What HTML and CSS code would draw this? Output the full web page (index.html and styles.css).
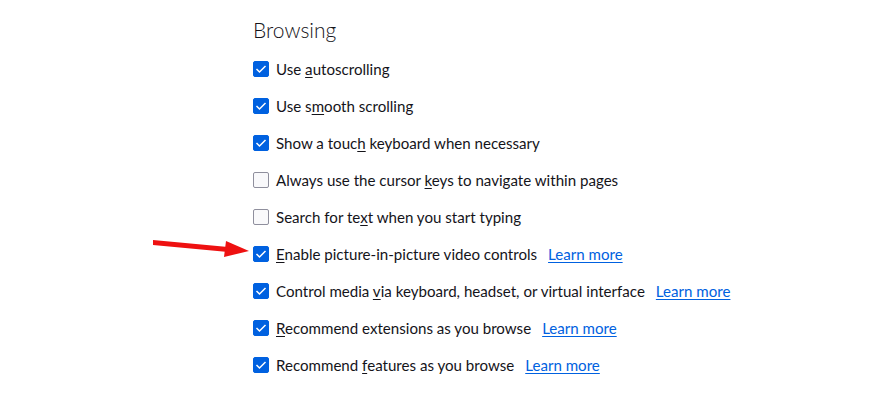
FILE: index.html
```html
<!DOCTYPE html>
<html lang="en">

<head>
  <meta charset="UTF-8">
  <title>Browsing</title>
  <link rel="stylesheet" href="styles.css">
</head>

<body>
  <div class="pane">
    <h2 class="pane-tit">Browsing</h2>
    <ul class="opts">
      <li class="opt"><span class="box on"></span><span class="lbl">Use <u>a</u>utoscrolling</span></li>
      <li class="opt"><span class="box on"></span><span class="lbl">Use s<u>m</u>ooth scrolling</span></li>
      <li class="opt"><span class="box on"></span><span class="lbl">Show a touc<u>h</u> keyboard when necessary</span></li>
      <li class="opt"><span class="box"></span><span class="lbl">Always use the cursor <u>k</u>eys to navigate within pages</span></li>
      <li class="opt"><span class="box"></span><span class="lbl">Search for te<u>x</u>t when you start typing</span></li>
      <li class="opt mark"><span class="box on"></span><span class="lbl"><u>E</u>nable picture-in-picture video controls</span><a class="more" href="#">Learn more</a>
        <!-- red pointer arrow -->
        <svg class="arrow" width="104" height="24" viewBox="0 0 104 24">
          <path d="M3 4 L78 11 L78 16 L3 9 Z" fill="#ee1111"/>
          <path d="M76 5 L99 15 L74 21 Z" fill="#ee1111"/>
        </svg>
      </li>
      <li class="opt"><span class="box on"></span><span class="lbl">Control media <u>v</u>ia keyboard, headset, or virtual interface</span><a class="more" href="#">Learn more</a></li>
      <li class="opt"><span class="box on"></span><span class="lbl"><u>R</u>ecommend extensions as you browse</span><a class="more" href="#">Learn more</a></li>
      <li class="opt"><span class="box on"></span><span class="lbl">Recommend <u>f</u>eatures as you browse</span><a class="more" href="#">Learn more</a></li>
    </ul>
  </div>
</body>

</html>
```

FILE: styles.css
```css
body,
h2,
ul {
  margin: 0;
  padding: 0;
}

body {
  background-color: #fff;
  font-family: "Lato", "Liberation Sans", sans-serif;
  color: #15141a;
}

ul {
  list-style: none;
}

.pane {
  padding: 16px 0 0 253px;
}

.pane-tit {
  font-size: 21px;
  font-weight: 300;
  line-height: 28px;
  color: #15141a;
  margin-bottom: 13px;
}

.opts {
  display: flex;
  flex-direction: column;
  gap: 13px;
}

.opt {
  position: relative;
  display: flex;
  align-items: center;
  height: 24px;
  font-size: 15.1px;
}

.box {
  width: 16px;
  height: 16px;
  box-sizing: border-box;
  border: 1px solid #8f8f9d;
  border-radius: 2px;
  background-color: #f9f9fb;
  margin-right: 7px;
  flex: none;
}

.box.on {
  border-color: #0061e0;
  background: #0061e0 url("data:image/svg+xml,%3Csvg xmlns='http://www.w3.org/2000/svg' width='16' height='16'%3E%3Cpath d='M3.5 8 L6.5 11 L12.5 5' fill='none' stroke='white' stroke-width='1.5'/%3E%3C/svg%3E") center/16px 16px no-repeat;
}

.lbl u {
  text-decoration-thickness: 1px;
  text-underline-offset: 2px;
}

.more {
  margin-left: 11px;
  color: #0061e0;
  text-decoration-thickness: 1px;
  text-underline-offset: 2px;
}

.arrow {
  position: absolute;
  left: -103px;
  top: -6px;
}
```
